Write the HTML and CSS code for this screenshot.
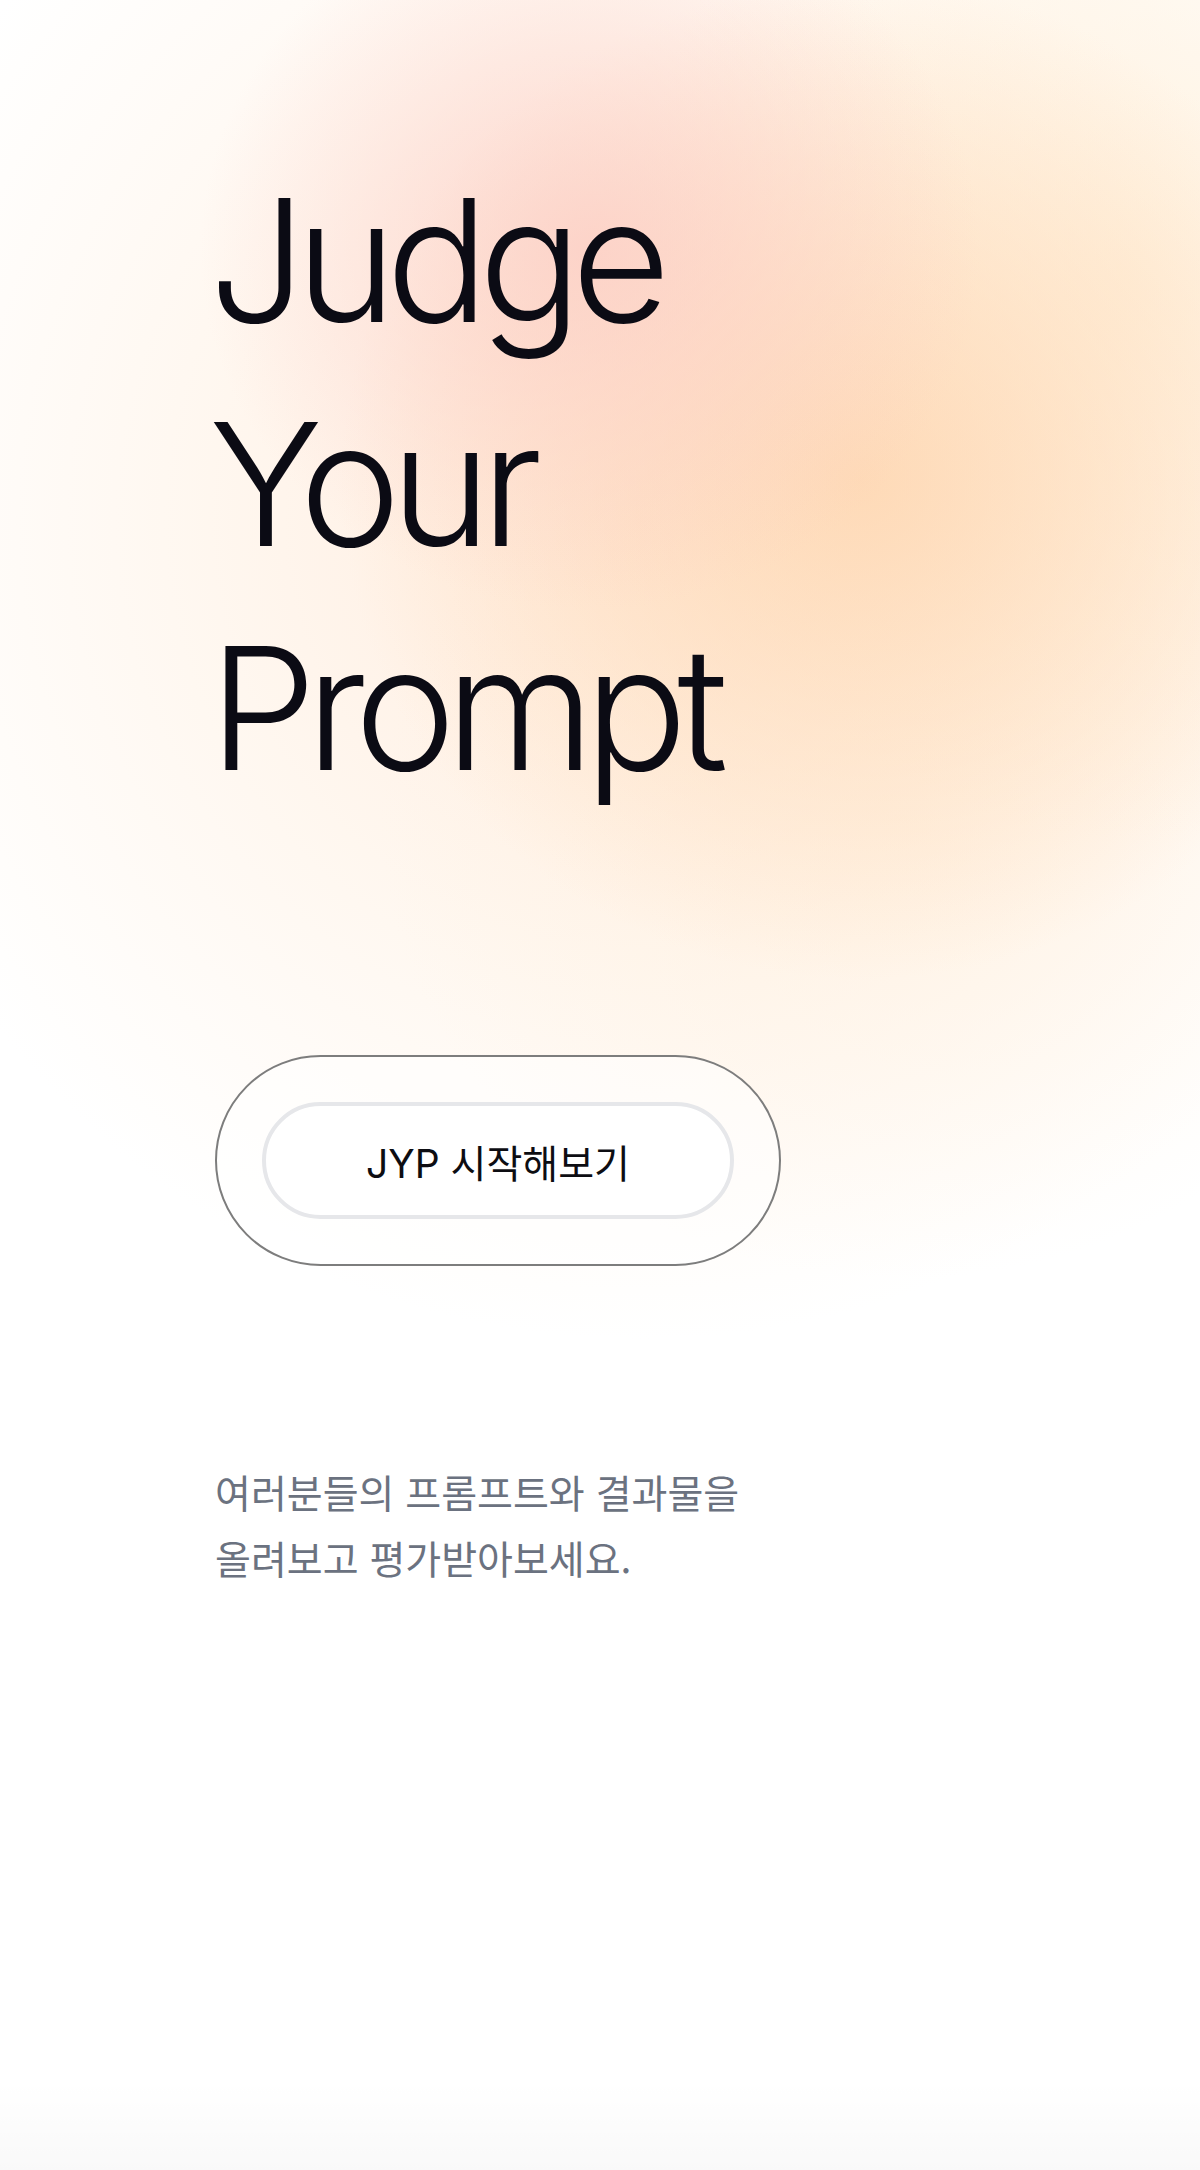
FILE: index.html
```html
<!DOCTYPE html>
<html lang="ko">
<head>
<meta charset="utf-8">
<title>Judge Your Prompt</title>
<link rel="stylesheet" href="styles.css">
</head>
<body>
  <main class="hero">
    <h1 class="title">
      <span class="title-line">Judge</span>
      <span class="title-line">Your</span>
      <span class="title-line">Prompt</span>
    </h1>
    <div class="cta-ring">
      <button class="cta" type="button">JYP 시작해보기</button>
    </div>
    <p class="desc">여러분들의 프롬프트와 결과물을<br>올려보고 평가받아보세요.</p>
  </main>
</body>
</html>
```

FILE: styles.css
```css
html {
  background: #ffffff;
}

body {
  margin: 0;
  min-height: 2170px;
  font-family: Inter, "Noto Sans CJK KR", sans-serif;
  background:
    radial-gradient(ellipse 390px 360px at 590px 250px, rgba(252, 205, 196, 0.8), rgba(252, 205, 196, 0) 100%),
    radial-gradient(ellipse 520px 500px at 860px 480px, rgba(254, 214, 176, 0.85), rgba(254, 218, 180, 0) 100%),
    radial-gradient(ellipse 500px 560px at 1130px 280px, rgba(255, 236, 208, 0.6), rgba(255, 240, 215, 0) 100%),
    radial-gradient(ellipse 520px 460px at 900px 820px, rgba(255, 238, 218, 0.55), rgba(255, 242, 225, 0) 100%),
    radial-gradient(ellipse 820px 820px at 640px 520px, rgba(255, 232, 215, 0.85), rgba(255, 240, 225, 0.5) 55%, rgba(255, 248, 240, 0) 100%),
    linear-gradient(to bottom, rgba(0, 0, 0, 0) 2080px, rgba(0, 0, 0, 0.025) 2170px),
    #ffffff;
}

.hero {
  display: flex;
  flex-direction: column;
  align-items: flex-start;
  padding: 148px 0 0 215px;
}

.title {
  margin: 0 0 0 -6px;
  display: flex;
  flex-direction: column;
  font-family: Inter, sans-serif;
  font-size: 171px;
  font-weight: 300;
  line-height: 224px;
  letter-spacing: -0.06em;
  color: #0b0b14;
}

.cta-ring {
  margin-top: 235px;
  padding: 45px;
  border: 2px solid #7d7d7d;
  border-radius: 999px;
  background: rgba(255, 255, 255, 0.55);
}

.cta {
  display: flex;
  align-items: center;
  justify-content: center;
  width: 472px;
  height: 117px;
  box-sizing: border-box;
  border: 4px solid #e6e7ea;
  border-radius: 999px;
  background: #ffffff;
  font-family: Inter, "Noto Sans CJK KR", sans-serif;
  font-size: 39px;
  font-weight: 400;
  color: #0d0d12;
  cursor: pointer;
}

.desc {
  margin: 192px 0 0;
  font-family: "Noto Sans CJK KR", sans-serif;
  font-size: 39px;
  line-height: 66px;
  font-weight: 400;
  color: #6b7280;
}
```
